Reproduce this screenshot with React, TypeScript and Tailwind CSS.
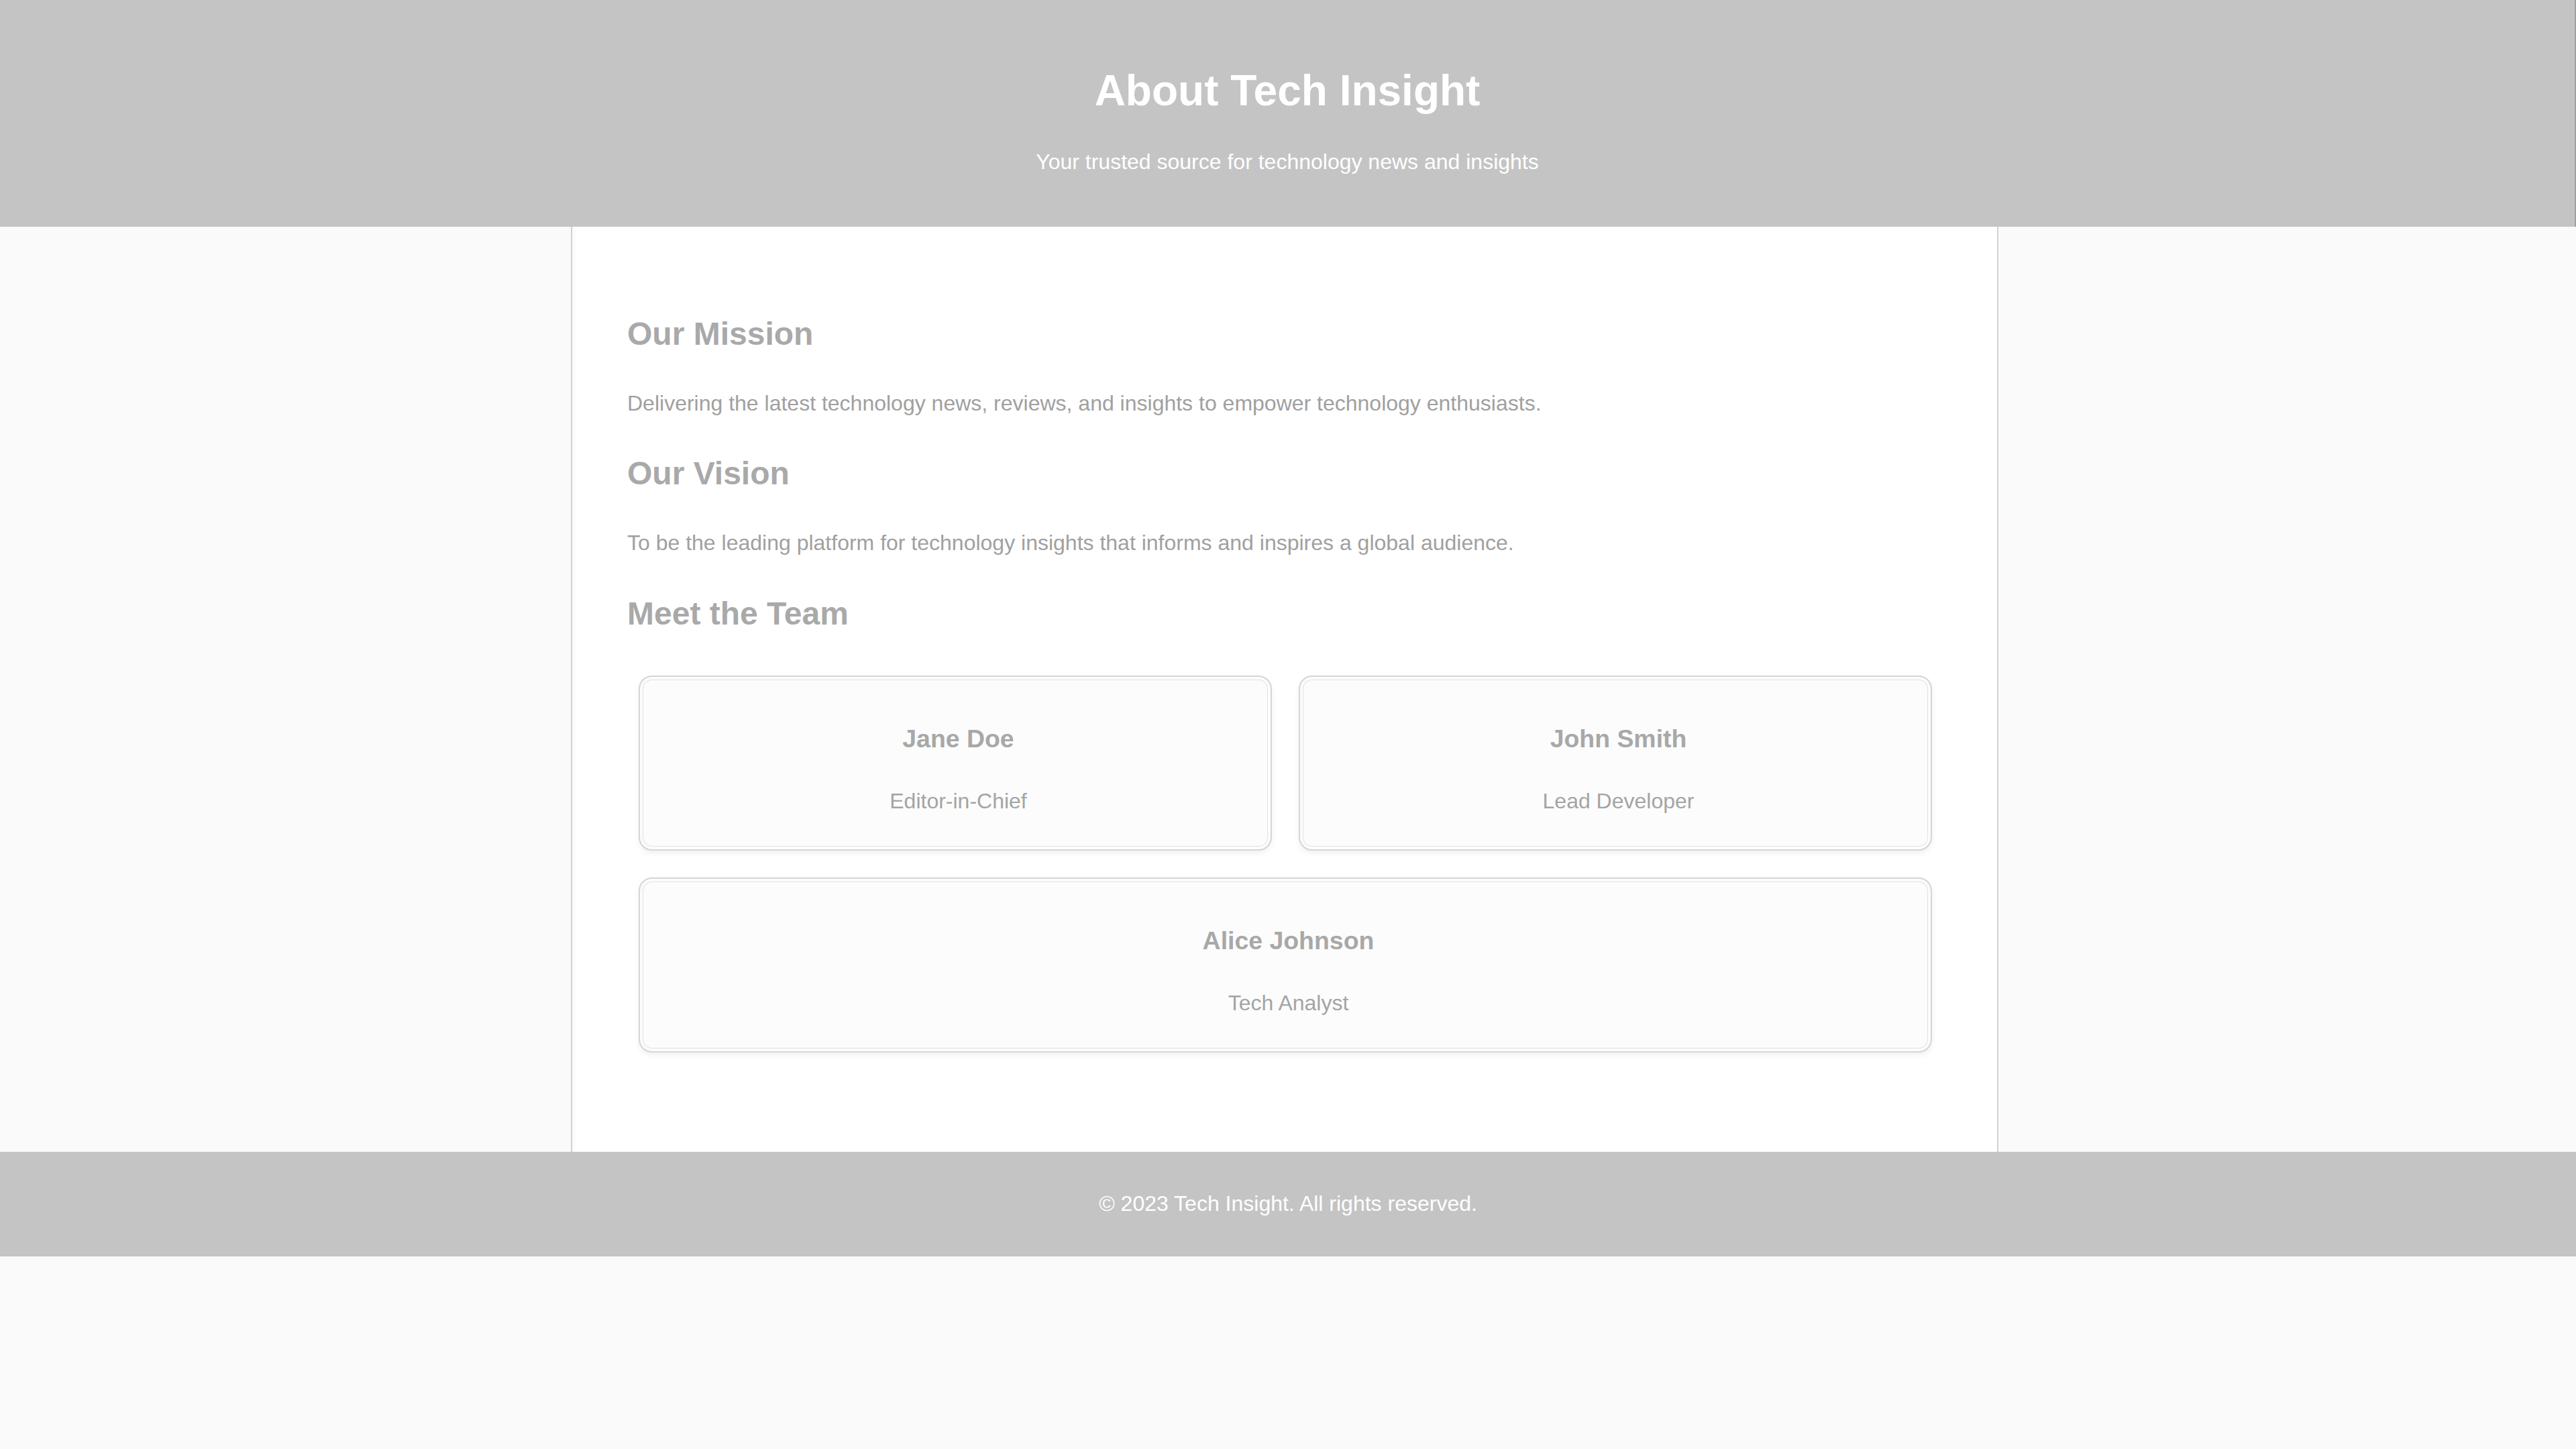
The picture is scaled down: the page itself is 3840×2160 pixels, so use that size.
const team = [
  { name: 'Jane Doe', role: 'Editor-in-Chief' },
  { name: 'John Smith', role: 'Lead Developer' },
  { name: 'Alice Johnson', role: 'Tech Analyst' },
]

function TeamCard({ name, role }: { name: string; role: string }) {
  return (
    <div className="flex-[1_1_900px] flex flex-col items-center rounded-[20px] border-2 border-[#d6d6d6] bg-[#fcfcfc] pl-[9px] pt-[71px] pb-[53px] shadow-[inset_0_0_0_4px_#fcfcfc,inset_0_0_0_5px_#e2e2e2,0_4px_8px_rgba(0,0,0,0.06)]">
      <h3 className="text-[37.44px] leading-[43px] font-bold text-[#a8a8a8]">{name}</h3>
      <p className="mt-[53px] text-[32px] leading-[37px] text-[#a4a4a4]">{role}</p>
    </div>
  )
}

export default function App() {
  return (
    <div className="min-h-[2160px] bg-[#fafafa] font-['Liberation_Sans',Arial,sans-serif]">
      {/* Header */}
      <header className="h-[338px] bg-[#c4c4c4] flex flex-col items-center border-r-2 border-[#a0a0a0]">
        <h1 className="mt-[98px] text-[64px] leading-[74px] font-bold text-white">About Tech Insight</h1>
        <p className="mt-[51px] text-[32px] leading-[37px] text-white">
          Your trusted source for technology news and insights
        </p>
      </header>

      {/* Main */}
      <div className="pr-[10px]">
        <main className="mx-auto w-[2128px] bg-white border-x-2 border-[#d2d2d2] shadow-[inset_6px_0_6px_-4px_rgba(0,0,0,0.04)] px-[82px] pt-[132px] pb-[133px] flex flex-col">
          <h2 className="text-[48px] leading-[55px] font-bold text-[#a9a9a9] mb-[58px]">Our Mission</h2>
          <p className="text-[32px] leading-[37px] text-[#a0a0a0] mb-[58px]">
            Delivering the latest technology news, reviews, and insights to empower technology enthusiasts.
          </p>

          <h2 className="text-[48px] leading-[55px] font-bold text-[#a9a9a9] mb-[58px]">Our Vision</h2>
          <p className="text-[32px] leading-[37px] text-[#a0a0a0] mb-[59px]">
            To be the leading platform for technology insights that informs and inspires a global audience.
          </p>

          <h2 className="text-[48px] leading-[55px] font-bold text-[#a9a9a9] mb-[50px]">Meet the Team</h2>
          <div className="flex flex-wrap gap-x-[40px] gap-y-[40px] py-[15px] pl-[17px] pr-[15px]">
            {team.map((m) => (
              <TeamCard key={m.name} name={m.name} role={m.role} />
            ))}
          </div>
        </main>
      </div>

      {/* Footer */}
      <footer className="h-[156px] bg-[#c4c4c4] flex items-center justify-center">
        <p className="mb-[2px] text-[32px] leading-[37px] text-white">© 2023 Tech Insight. All rights reserved.</p>
      </footer>
    </div>
  )
}
